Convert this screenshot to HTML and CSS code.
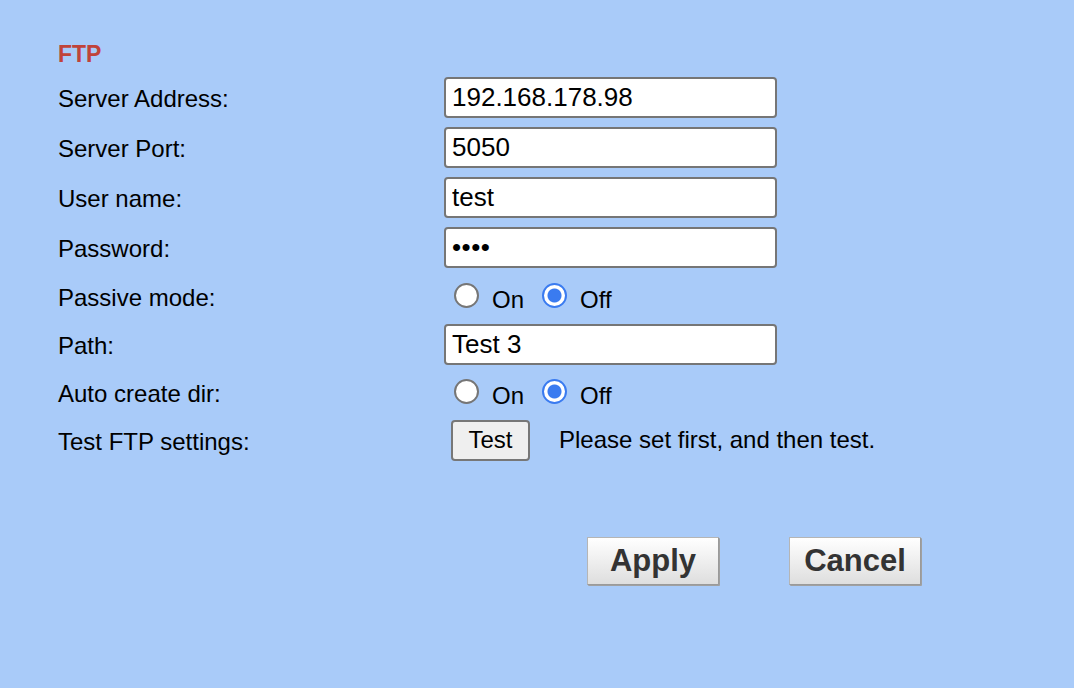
FILE: index.html
```html
<!DOCTYPE html>
<html>
<head>
<meta charset="utf-8">
<link rel="stylesheet" href="styles.css">
</head>
<body>
<div class="page">
  <div class="title">FTP</div>
  <div class="row">
    <div class="label">Server Address:</div>
    <input class="field" type="text" value="192.168.178.98">
  </div>
  <div class="row">
    <div class="label">Server Port:</div>
    <input class="field" type="text" value="5050">
  </div>
  <div class="row">
    <div class="label">User name:</div>
    <input class="field" type="text" value="test">
  </div>
  <div class="row">
    <div class="label">Password:</div>
    <input class="field" type="password" value="test">
  </div>
  <div class="row short">
    <div class="label">Passive mode:</div>
    <div class="radios">
      <label class="opt"><input type="radio" name="pm" class="radio"><span>On</span></label>
      <label class="opt"><input type="radio" name="pm" class="radio" checked><span>Off</span></label>
    </div>
  </div>
  <div class="row short">
    <div class="label">Path:</div>
    <input class="field" type="text" value="Test 3">
  </div>
  <div class="row short">
    <div class="label">Auto create dir:</div>
    <div class="radios">
      <label class="opt"><input type="radio" name="ac" class="radio"><span>On</span></label>
      <label class="opt"><input type="radio" name="ac" class="radio" checked><span>Off</span></label>
    </div>
  </div>
  <div class="row short">
    <div class="label">Test FTP settings:</div>
    <button class="test-btn" type="button">Test</button>
    <span class="hint">Please set first, and then test.</span>
  </div>
  <div class="actions">
    <button class="big-btn" type="button">Apply</button>
    <button class="big-btn" type="button">Cancel</button>
  </div>
</div>
</body>
</html>
```
FILE: styles.css
```css
html, body {
  margin: 0;
  padding: 0;
}
body {
  background: #a9cbf9;
  font-family: "Liberation Sans", Arial, sans-serif;
  color: #000;
  min-height: 688px;
}
.page {
  padding: 36px 0 0 58px;
}
.title {
  height: 36px;
  line-height: 36px;
  font-size: 23px;
  font-weight: bold;
  color: #c0433a;
}
.row {
  height: 50px;
  display: flex;
  align-items: center;
}
.row.short {
  height: 48px;
}
.label {
  width: 386px;
  flex: none;
  font-size: 24px;
  padding-top: 4px;
}
.field {
  box-sizing: border-box;
  width: 333px;
  height: 41px;
  margin: 0;
  border: 2px solid #767676;
  border-radius: 4px;
  background: #fff;
  font-family: "Liberation Sans", Arial, sans-serif;
  font-size: 26px;
  padding: 0 6px;
  color: #000;
  outline: none;
}
.field[type="password"] {
  font-size: 26px;
  letter-spacing: 0.5px;
}
.radios {
  display: flex;
  align-items: center;
  margin-left: 10px;
}
.opt {
  display: flex;
  align-items: center;
  font-size: 24px;
  margin-right: 18px;
}
.opt span {
  margin-left: 13px;
  padding-top: 8px;
}
.radio {
  -webkit-appearance: none;
  appearance: none;
  box-sizing: border-box;
  width: 25px;
  height: 25px;
  margin: 0 0 2px 0;
  border: 2px solid #767676;
  border-radius: 50%;
  background: #fff;
}
.radio:checked {
  border: 2px solid #3a7bf0;
  background: radial-gradient(circle, #3a7bf0 0, #3a7bf0 6.5px, #fff 7.5px);
}
.test-btn {
  box-sizing: border-box;
  width: 79px;
  height: 41px;
  margin: 0 0 0 7px;
  padding: 0;
  border: 2px solid #777;
  border-radius: 4px;
  background: #efefef;
  font-family: "Liberation Sans", Arial, sans-serif;
  font-size: 24px;
  color: #000;
}
.hint {
  margin-left: 29px;
  font-size: 24px;
}
.actions {
  display: flex;
  gap: 70px;
  margin-top: 73px;
  padding-left: 529px;
}
.big-btn {
  box-sizing: border-box;
  width: 132px;
  height: 48px;
  margin: 0;
  padding: 0;
  border: 1px solid #b5b5b5;
  border-right-color: #9a9a9a;
  border-bottom-color: #9a9a9a;
  border-radius: 1px;
  background: linear-gradient(#ffffff, #dedede);
  box-shadow: 1px 1px 0 #a0a0a0;
  font-family: "Liberation Sans", Arial, sans-serif;
  font-size: 31px;
  font-weight: bold;
  color: #333;
}
```
